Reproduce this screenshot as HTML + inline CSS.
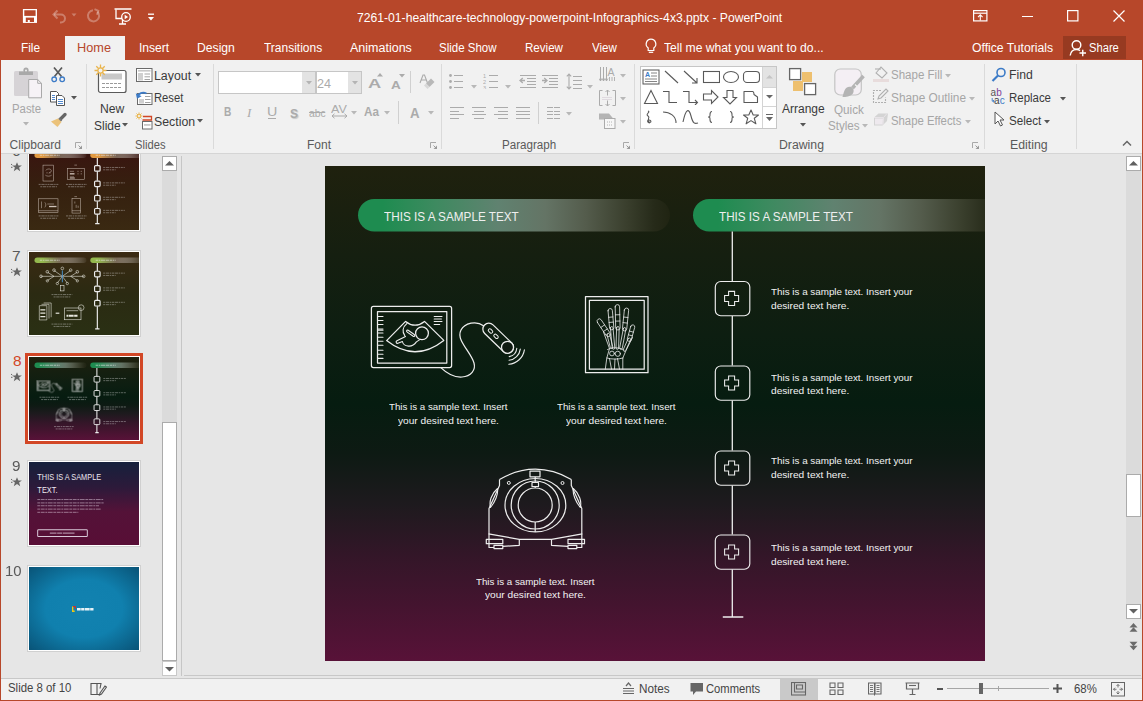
<!DOCTYPE html><html><head><meta charset="utf-8"><style>html,body{margin:0;padding:0;width:1143px;height:701px;overflow:hidden;position:relative;background:#E6E6E6;font-family:"Liberation Sans",sans-serif}</style></head><body><div style="position:absolute;left:0px;top:0px;width:1143px;height:701px;background:#E6E6E6;"></div>
<div style="position:absolute;left:0px;top:0px;width:1143px;height:60px;background:#B7472A;"></div>
<div style="position:absolute;left:0px;top:0px;width:1px;height:701px;background:#B7472A;"></div>
<div style="position:absolute;left:1142px;top:0px;width:1px;height:701px;background:#B7472A;"></div>
<div style="position:absolute;left:0px;top:700px;width:1143px;height:1px;background:#B7472A;"></div>
<svg style="position:absolute;left:22px;top:8px;" width="16" height="16" viewBox="0 0 16 16"><path d="M1.6 1.6h12.7v12.4h-12.7z" fill="none" stroke="#fff" stroke-width="1.4"/><rect x="1" y="7.9" width="14" height="6.8" fill="#fff"/><rect x="3.8" y="9.6" width="8.2" height="4.4" fill="#B7472A"/><rect x="5.8" y="12" width="2" height="2" fill="#fff"/></svg>
<svg style="position:absolute;left:51px;top:8px;" width="16" height="16" viewBox="0 0 16 16"><path d="M3 6.5h7a4 4 0 0 1 0 8h-1" fill="none" stroke="rgba(255,255,255,0.3)" stroke-width="2"/><path d="M6.5 2.5L2.5 6.5L6.5 10.5" fill="none" stroke="rgba(255,255,255,0.3)" stroke-width="2"/></svg>
<svg style="position:absolute;left:71px;top:13px;" width="7" height="5" viewBox="0 0 7 5"><path d="M0.5 0.5h5l-2.5 3z" fill="rgba(255,255,255,0.3)"/></svg>
<svg style="position:absolute;left:86px;top:8px;" width="16" height="16" viewBox="0 0 16 16"><path d="M11.5 3.8a5.6 5.6 0 1 1-4.5-1.6" fill="none" stroke="rgba(255,255,255,0.3)" stroke-width="2"/><path d="M8.5 1.2l3.8 1.6l-1.3 4" fill="none" stroke="rgba(255,255,255,0.3)" stroke-width="2"/></svg>
<svg style="position:absolute;left:114px;top:8px;" width="18" height="17" viewBox="0 0 18 17"><path d="M0.5 1h17" stroke="#fff" stroke-width="1.5"/><path d="M2 1.5v9h6" fill="none" stroke="#fff" stroke-width="1.3"/><circle cx="12" cy="9" r="4.3" fill="none" stroke="#fff" stroke-width="1.3"/><path d="M10.7 6.8v4.4l3.4-2.2z" fill="#fff"/><path d="M5 16h7M8.5 11v5" stroke="#fff" stroke-width="1.3"/></svg>
<svg style="position:absolute;left:147px;top:13px;" width="8" height="9" viewBox="0 0 8 9"><path d="M1 1.2h6" stroke="#fff" stroke-width="1.3"/><path d="M1 4h6l-3 3.5z" fill="#fff"/></svg>
<div style="position:absolute;left:357.03px;top:12.42px;font-family:'Liberation Sans';font-size:12.5px;line-height:12.5px;font-weight:400;color:#fff;white-space:nowrap;transform-origin:0 0;transform:scaleX(0.9725);">7261-01-healthcare-technology-powerpoint-Infographics-4x3.pptx - PowerPoint</div>
<svg style="position:absolute;left:973px;top:10px;" width="15" height="12" viewBox="0 0 15 12"><rect x="0.6" y="0.6" width="13.3" height="10.3" fill="none" stroke="#fff" stroke-width="1.2"/><path d="M0.6 3.2h13.3" stroke="#fff" stroke-width="1.2"/><path d="M7.3 10.5v-5.5M5 7.2l2.3-2.3l2.3 2.3" fill="none" stroke="#fff" stroke-width="1.1"/></svg>
<div style="position:absolute;left:1022px;top:16px;width:11px;height:1px;background:#fff;"></div>
<svg style="position:absolute;left:1067px;top:10px;" width="12" height="12" viewBox="0 0 12 12"><rect x="0.6" y="0.6" width="10.3" height="10.3" fill="none" stroke="#fff" stroke-width="1.2"/></svg>
<svg style="position:absolute;left:1113px;top:10px;" width="12" height="12" viewBox="0 0 12 12"><path d="M0.5 0.5l11 11M11.5 0.5l-11 11" stroke="#fff" stroke-width="1.2"/></svg>
<div style="position:absolute;left:65px;top:36px;width:60px;height:24px;background:#F1F1F1;"></div>
<div style="position:absolute;left:21.05px;top:41.92px;font-family:'Liberation Sans';font-size:12.5px;line-height:12.5px;font-weight:400;color:#fff;white-space:nowrap;transform-origin:0 0;transform:scaleX(0.9474);">File</div>
<div style="position:absolute;left:139.03px;top:41.92px;font-family:'Liberation Sans';font-size:12.5px;line-height:12.5px;font-weight:400;color:#fff;white-space:nowrap;transform-origin:0 0;transform:scaleX(0.9667);">Insert</div>
<div style="position:absolute;left:197.03px;top:41.92px;font-family:'Liberation Sans';font-size:12.5px;line-height:12.5px;font-weight:400;color:#fff;white-space:nowrap;transform-origin:0 0;transform:scaleX(0.9730);">Design</div>
<div style="position:absolute;left:263.50px;top:41.92px;font-family:'Liberation Sans';font-size:12.5px;line-height:12.5px;font-weight:400;color:#fff;white-space:nowrap;transform-origin:0 0;transform:scaleX(0.9583);">Transitions</div>
<div style="position:absolute;left:350.00px;top:41.92px;font-family:'Liberation Sans';font-size:12.5px;line-height:12.5px;font-weight:400;color:#fff;white-space:nowrap;transform-origin:0 0;transform:scaleX(1.0000);">Animations</div>
<div style="position:absolute;left:439.08px;top:41.92px;font-family:'Liberation Sans';font-size:12.5px;line-height:12.5px;font-weight:400;color:#fff;white-space:nowrap;transform-origin:0 0;transform:scaleX(0.9194);">Slide Show</div>
<div style="position:absolute;left:525.08px;top:41.92px;font-family:'Liberation Sans';font-size:12.5px;line-height:12.5px;font-weight:400;color:#fff;white-space:nowrap;transform-origin:0 0;transform:scaleX(0.9250);">Review</div>
<div style="position:absolute;left:592.00px;top:41.92px;font-family:'Liberation Sans';font-size:12.5px;line-height:12.5px;font-weight:400;color:#fff;white-space:nowrap;transform-origin:0 0;transform:scaleX(0.9259);">View</div>
<div style="position:absolute;left:77.38px;top:41.92px;font-family:'Liberation Sans';font-size:12.5px;line-height:12.5px;font-weight:400;color:#B7472A;white-space:nowrap;transform-origin:0 0;transform:scaleX(1.0187);">Home</div>
<svg style="position:absolute;left:644px;top:38px;" width="14" height="17" viewBox="0 0 14 17"><path d="M7 1.2a4.8 4.8 0 0 0-2.8 8.7v2.6h5.6v-2.6A4.8 4.8 0 0 0 7 1.2z" fill="none" stroke="#fff" stroke-width="1.2"/><path d="M4.8 14.3h4.4" stroke="#fff" stroke-width="1.2"/></svg>
<div style="position:absolute;left:664.00px;top:41.92px;font-family:'Liberation Sans';font-size:12.5px;line-height:12.5px;font-weight:400;color:#fff;white-space:nowrap;transform-origin:0 0;transform:scaleX(0.9695);">Tell me what you want to do...</div>
<div style="position:absolute;left:972.02px;top:41.92px;font-family:'Liberation Sans';font-size:12.5px;line-height:12.5px;font-weight:400;color:#fff;white-space:nowrap;transform-origin:0 0;transform:scaleX(0.9756);">Office Tutorials</div>
<div style="position:absolute;left:1063px;top:36px;width:63px;height:23px;background:#973A21;"></div>
<svg style="position:absolute;left:1069px;top:39px;" width="18" height="18" viewBox="0 0 18 18"><circle cx="7.5" cy="6" r="4.3" fill="none" stroke="#fff" stroke-width="1.4"/><path d="M1.2 16.5c0.5-3.8 3-6 6.3-6c1.4 0 2.6 0.4 3.6 1.1" fill="none" stroke="#fff" stroke-width="1.4"/><path d="M10.5 14h6.5M13.75 10.8v6.5" stroke="#fff" stroke-width="1.4"/></svg>
<div style="position:absolute;left:1088.51px;top:41.92px;font-family:'Liberation Sans';font-size:12.5px;line-height:12.5px;font-weight:400;color:#fff;white-space:nowrap;transform-origin:0 0;transform:scaleX(0.8937);">Share</div>
<div style="position:absolute;left:1px;top:60px;width:1141px;height:93px;background:#F1F1F1;"></div>
<div style="position:absolute;left:1px;top:153px;width:1141px;height:1px;background:#D5D5D5;"></div>
<div style="position:absolute;left:86px;top:64px;width:1px;height:85px;background:#DADADA;"></div>
<div style="position:absolute;left:213px;top:64px;width:1px;height:85px;background:#DADADA;"></div>
<div style="position:absolute;left:441px;top:64px;width:1px;height:85px;background:#DADADA;"></div>
<div style="position:absolute;left:634px;top:64px;width:1px;height:85px;background:#DADADA;"></div>
<div style="position:absolute;left:984px;top:64px;width:1px;height:85px;background:#DADADA;"></div>
<div style="position:absolute;left:1076px;top:64px;width:1px;height:85px;background:#DADADA;"></div>
<div style="position:absolute;left:9.60px;top:138.84px;font-family:'Liberation Sans';font-size:12px;line-height:12px;font-weight:400;color:#5A5A5A;white-space:nowrap;transform-origin:0 0;transform:scaleX(1.0000);">Clipboard</div>
<div style="position:absolute;left:134.67px;top:138.84px;font-family:'Liberation Sans';font-size:12px;line-height:12px;font-weight:400;color:#5A5A5A;white-space:nowrap;transform-origin:0 0;transform:scaleX(0.9323);">Slides</div>
<div style="position:absolute;left:306.50px;top:138.84px;font-family:'Liberation Sans';font-size:12px;line-height:12px;font-weight:400;color:#5A5A5A;white-space:nowrap;transform-origin:0 0;transform:scaleX(1.0043);">Font</div>
<div style="position:absolute;left:502.33px;top:138.84px;font-family:'Liberation Sans';font-size:12px;line-height:12px;font-weight:400;color:#5A5A5A;white-space:nowrap;transform-origin:0 0;transform:scaleX(0.9667);">Paragraph</div>
<div style="position:absolute;left:778.58px;top:138.84px;font-family:'Liberation Sans';font-size:12px;line-height:12px;font-weight:400;color:#5A5A5A;white-space:nowrap;transform-origin:0 0;transform:scaleX(1.0214);">Drawing</div>
<div style="position:absolute;left:1010.47px;top:138.84px;font-family:'Liberation Sans';font-size:12px;line-height:12px;font-weight:400;color:#5A5A5A;white-space:nowrap;transform-origin:0 0;transform:scaleX(1.0257);">Editing</div>
<svg style="position:absolute;left:75px;top:142px;" width="8" height="8" viewBox="0 0 8 8"><path d="M0.5 6V0.5H6" fill="none" stroke="#A8A8A8" stroke-width="1"/><path d="M3.5 3.5l2.5 2.5" stroke="#999" stroke-width="1"/><path d="M7 3.5V7H3.5z" fill="#999"/></svg>
<svg style="position:absolute;left:430px;top:142px;" width="8" height="8" viewBox="0 0 8 8"><path d="M0.5 6V0.5H6" fill="none" stroke="#A8A8A8" stroke-width="1"/><path d="M3.5 3.5l2.5 2.5" stroke="#999" stroke-width="1"/><path d="M7 3.5V7H3.5z" fill="#999"/></svg>
<svg style="position:absolute;left:623px;top:142px;" width="8" height="8" viewBox="0 0 8 8"><path d="M0.5 6V0.5H6" fill="none" stroke="#A8A8A8" stroke-width="1"/><path d="M3.5 3.5l2.5 2.5" stroke="#999" stroke-width="1"/><path d="M7 3.5V7H3.5z" fill="#999"/></svg>
<svg style="position:absolute;left:972px;top:142px;" width="8" height="8" viewBox="0 0 8 8"><path d="M0.5 6V0.5H6" fill="none" stroke="#A8A8A8" stroke-width="1"/><path d="M3.5 3.5l2.5 2.5" stroke="#999" stroke-width="1"/><path d="M7 3.5V7H3.5z" fill="#999"/></svg>
<svg style="position:absolute;left:13px;top:67px;" width="30" height="32" viewBox="0 0 30 32"><rect x="1" y="4" width="24" height="25" rx="1.5" fill="#D6D3D6"/><path d="M6 4.5h14v3.5h-14z" fill="#A9A9A9"/><circle cx="13" cy="3.2" r="2.6" fill="#A9A9A9"/><circle cx="13" cy="3.4" r="1" fill="#F1F1F1"/><path d="M15.7 12.5h9l3.8 3.8v14.5h-12.8z" fill="#F6F2F6" stroke="#A9A9A9" stroke-width="1"/><path d="M24.7 12.5v3.8h3.8" fill="none" stroke="#A9A9A9" stroke-width="1"/></svg>
<div style="position:absolute;left:11.55px;top:102.84px;font-family:'Liberation Sans';font-size:12px;line-height:12px;font-weight:400;color:#A6A6A6;white-space:nowrap;transform-origin:0 0;transform:scaleX(0.9483);">Paste</div>
<svg style="position:absolute;left:23px;top:122px;" width="6" height="4" viewBox="0 0 6 4"><path d="M0 0h6l-3 3.5z" fill="#B4B4B4"/></svg>
<svg style="position:absolute;left:50px;top:66px;" width="16" height="17" viewBox="0 0 16 17"><path d="M4 1.5l7.5 9M12 1.5l-7.5 9" stroke="#595959" stroke-width="1.7"/><circle cx="4.2" cy="13.3" r="2.3" fill="none" stroke="#3C7BC7" stroke-width="1.3"/><circle cx="12.2" cy="13.3" r="2.3" fill="none" stroke="#3C7BC7" stroke-width="1.3"/></svg>
<svg style="position:absolute;left:49px;top:90px;" width="17" height="17" viewBox="0 0 17 17"><path d="M1.5 1.5h6l2 2v8.5h-8z" fill="#fff" stroke="#555" stroke-width="1"/><path d="M7.5 5.5h5.5l2.5 2.5v7.5h-8z" fill="#fff" stroke="#555" stroke-width="1"/><path d="M3 5.5h3M3 7.5h3M3 9.5h3M9 9.5h5M9 11.5h5M9 13.5h5" stroke="#3C7BC7" stroke-width="0.9"/></svg>
<svg style="position:absolute;left:71px;top:96px;" width="6" height="4" viewBox="0 0 6 4"><path d="M0 0h6l-3 3.5z" fill="#555"/></svg>
<svg style="position:absolute;left:50px;top:112px;" width="17" height="17" viewBox="0 0 17 17"><path d="M15 2.5l-5 5" stroke="#666" stroke-width="3.2" stroke-linecap="round"/><path d="M9 6.5l2.5 2.5" stroke="#777" stroke-width="2"/><path d="M8 6.5l3.5 3.5l-4 5l-6.5-5.5z" fill="#EBC27A"/></svg>
<svg style="position:absolute;left:94px;top:64px;" width="34" height="31" viewBox="0 0 34 31"><rect x="4.5" y="6.5" width="27.5" height="22" rx="2" fill="#fff" stroke="#5A5A5A" stroke-width="1.2"/><rect x="7.5" y="9.5" width="20.5" height="6" fill="#C8C8C8"/><path d="M8 19.5h20M8 23.5h20" stroke="#9A9A9A" stroke-width="1" stroke-dasharray="3 1"/><g stroke="#E9B44C" stroke-width="1.3"><path d="M6.5 0.5v12M0.5 6.5h12M2.3 2.3l8.4 8.4M10.7 2.3l-8.4 8.4"/></g><circle cx="6.5" cy="6.5" r="2.6" fill="#F1F1F1" stroke="#E9B44C" stroke-width="1.2"/></svg>
<div style="position:absolute;left:99.69px;top:102.84px;font-family:'Liberation Sans';font-size:12px;line-height:12px;font-weight:400;color:#3A3A3A;white-space:nowrap;transform-origin:0 0;transform:scaleX(1.0130);">New</div>
<div style="position:absolute;left:94.00px;top:119.84px;font-family:'Liberation Sans';font-size:12px;line-height:12px;font-weight:400;color:#3A3A3A;white-space:nowrap;transform-origin:0 0;transform:scaleX(1.0000);">Slide</div>
<svg style="position:absolute;left:122px;top:123px;" width="6" height="4" viewBox="0 0 6 4"><path d="M0 0h6l-3 3.5z" fill="#555"/></svg>
<svg style="position:absolute;left:135px;top:67px;" width="18" height="16" viewBox="0 0 18 16"><rect x="1.5" y="1.5" width="15.5" height="13" fill="#fff" stroke="#6A6A6A" stroke-width="1"/><rect x="3" y="3" width="12.5" height="1.6" fill="#C8C8C8"/><rect x="3" y="6" width="5" height="7.5" fill="#D0D0D0"/><path d="M9.5 7h5.5M9.5 9.8h5.5M9.5 12.5h5.5" stroke="#9A9A9A" stroke-width="0.9"/></svg>
<div style="position:absolute;left:153.97px;top:69.84px;font-family:'Liberation Sans';font-size:12px;line-height:12px;font-weight:400;color:#3A3A3A;white-space:nowrap;transform-origin:0 0;transform:scaleX(1.0286);">Layout</div>
<svg style="position:absolute;left:195px;top:73px;" width="6" height="4" viewBox="0 0 6 4"><path d="M0 0h6l-3 3.5z" fill="#555"/></svg>
<svg style="position:absolute;left:135px;top:90px;" width="18" height="16" viewBox="0 0 18 16"><rect x="2.5" y="3.5" width="14.5" height="11" fill="#fff" stroke="#6A6A6A" stroke-width="1"/><rect x="4" y="9" width="5" height="4.5" fill="#D0D0D0"/><path d="M10 6.5h5.5M10 9.5h5.5M10 12.5h5.5" stroke="#9A9A9A" stroke-width="0.9"/><path d="M2.5 6.5c1-3 5-5 9-3" fill="none" stroke="#3C7BC7" stroke-width="1.7"/><path d="M0.8 3.2l1.2 5.6l4.6-2.6z" fill="#3C7BC7"/></svg>
<div style="position:absolute;left:154.07px;top:92.44px;font-family:'Liberation Sans';font-size:12px;line-height:12px;font-weight:400;color:#3A3A3A;white-space:nowrap;transform-origin:0 0;transform:scaleX(0.9333);">Reset</div>
<svg style="position:absolute;left:135px;top:112px;" width="18" height="18" viewBox="0 0 18 18"><g stroke="#E9B44C" stroke-width="1"><path d="M4 0.5v7M0.5 4h7M1.5 1.5l5 5M6.5 1.5l-5 5"/></g><circle cx="4" cy="4" r="1.6" fill="#F1F1F1" stroke="#E9B44C" stroke-width="0.9"/><path d="M8 4.5h8.5v3.5h-9" fill="none" stroke="#D24726" stroke-width="1.3"/><rect x="7.5" y="9.5" width="9.5" height="7.5" fill="#fff" stroke="#6A6A6A" stroke-width="1"/><rect x="9" y="12" width="6.5" height="1.8" fill="#C8C8C8"/></svg>
<div style="position:absolute;left:153.97px;top:115.64px;font-family:'Liberation Sans';font-size:12px;line-height:12px;font-weight:400;color:#3A3A3A;white-space:nowrap;transform-origin:0 0;transform:scaleX(1.0263);">Section</div>
<svg style="position:absolute;left:197px;top:119px;" width="6" height="4" viewBox="0 0 6 4"><path d="M0 0h6l-3 3.5z" fill="#555"/></svg>
<div style="position:absolute;left:218px;top:71px;width:98px;height:23px;background:#fff;box-sizing:border-box;border:1px solid #C6C6C6"></div>
<div style="position:absolute;left:302px;top:72px;width:13px;height:21px;background:#E3E3E3;"></div>
<svg style="position:absolute;left:306px;top:81px;" width="6" height="4" viewBox="0 0 6 4"><path d="M0 0h6l-3 3.5z" fill="#B4B4B4"/></svg>
<div style="position:absolute;left:316px;top:71px;width:46px;height:23px;background:#fff;box-sizing:border-box;border:1px solid #C6C6C6"></div>
<div style="position:absolute;left:348px;top:72px;width:13px;height:21px;background:#E3E3E3;"></div>
<svg style="position:absolute;left:352px;top:81px;" width="6" height="4" viewBox="0 0 6 4"><path d="M0 0h6l-3 3.5z" fill="#B4B4B4"/></svg>
<div style="position:absolute;left:317.35px;top:77.84px;font-family:'Liberation Sans';font-size:12px;line-height:12px;font-weight:400;color:#ABABAB;white-space:nowrap;transform-origin:0 0;transform:scaleX(1.0500);">24</div>
<div style="position:absolute;left:367.80px;top:76.97px;font-family:'Liberation Sans';font-size:13.5px;line-height:13.5px;font-weight:700;color:#ABABAB;white-space:nowrap;transform-origin:0 0;transform:scaleX(1.3556);">A</div>
<svg style="position:absolute;left:377px;top:73px;" width="6" height="4" viewBox="0 0 6 4"><path d="M0 3.5h6l-3-3.5z" fill="#ABABAB"/></svg>
<div style="position:absolute;left:391.00px;top:79.51px;font-family:'Liberation Sans';font-size:10.5px;line-height:10.5px;font-weight:700;color:#ABABAB;white-space:nowrap;transform-origin:0 0;transform:scaleX(1.2857);">A</div>
<svg style="position:absolute;left:399px;top:74px;" width="6" height="4" viewBox="0 0 6 4"><path d="M0 0h6l-3 3.5z" fill="#ABABAB"/></svg>
<div style="position:absolute;left:410px;top:71px;width:1px;height:22px;background:#D0D0D0;"></div>
<svg style="position:absolute;left:418px;top:72px;" width="17" height="18" viewBox="0 0 17 18"><path d="M2 11l3-8h1.5l3 8M3.5 8h4.5" fill="none" stroke="#ABABAB" stroke-width="1.1"/><path d="M8 11.5l5-5l3.5 3.5l-5 5z" fill="#B8B8B8"/><path d="M8 11.5l3.5 3.5l-2 2l-3.5-3.5z" fill="#D8D8D8"/></svg>
<div style="position:absolute;left:224.19px;top:106.42px;font-family:'Liberation Sans';font-size:12.5px;line-height:12.5px;font-weight:700;color:#ABABAB;white-space:nowrap;transform-origin:0 0;transform:scaleX(0.8125);">B</div>
<div style="position:absolute;left:247.00px;top:106.00px;font-family:'Liberation Serif';font-size:13px;line-height:13px;font-weight:400;color:#ABABAB;white-space:nowrap;transform-origin:0 0;transform:scaleX(1.0000);font-style:italic">I</div>
<div style="position:absolute;left:266.86px;top:106.42px;font-family:'Liberation Sans';font-size:12.5px;line-height:12.5px;font-weight:400;color:#ABABAB;white-space:nowrap;transform-origin:0 0;transform:scaleX(1.1429);">U</div>
<div style="position:absolute;left:268px;top:118px;width:8px;height:1px;background:#ABABAB;"></div>
<div style="position:absolute;left:290.07px;top:106.50px;font-family:'Liberation Sans';font-size:13px;line-height:13px;font-weight:700;color:#ABABAB;white-space:nowrap;transform-origin:0 0;transform:scaleX(0.9286);text-shadow:1px 1px 1px #C8C8C8">S</div>
<div style="position:absolute;left:309.00px;top:107.69px;font-family:'Liberation Sans';font-size:11px;line-height:11px;font-weight:400;color:#ABABAB;white-space:nowrap;transform-origin:0 0;transform:scaleX(0.9412);">abc</div>
<div style="position:absolute;left:309px;top:112px;width:16px;height:1px;background:#ABABAB;"></div>
<div style="position:absolute;left:331.00px;top:103.69px;font-family:'Liberation Sans';font-size:11px;line-height:11px;font-weight:400;color:#ABABAB;white-space:nowrap;transform-origin:0 0;transform:scaleX(1.1429);">AV</div>
<svg style="position:absolute;left:331px;top:113px;" width="17" height="6" viewBox="0 0 17 6"><path d="M1 3h15M3.5 0.8L1 3l2.5 2.2M13.5 0.8L16 3l-2.5 2.2" fill="none" stroke="#ABABAB" stroke-width="1"/></svg>
<svg style="position:absolute;left:351px;top:111px;" width="6" height="4" viewBox="0 0 6 4"><path d="M0 0h6l-3 3.5z" fill="#B8B8B8"/></svg>
<div style="position:absolute;left:364.00px;top:106.42px;font-family:'Liberation Sans';font-size:12.5px;line-height:12.5px;font-weight:700;color:#ABABAB;white-space:nowrap;transform-origin:0 0;transform:scaleX(0.9375);">Aa</div>
<svg style="position:absolute;left:384px;top:111px;" width="6" height="4" viewBox="0 0 6 4"><path d="M0 0h6l-3 3.5z" fill="#B8B8B8"/></svg>
<div style="position:absolute;left:398px;top:101px;width:1px;height:23px;background:#D0D0D0;"></div>
<div style="position:absolute;left:410.00px;top:105.65px;font-family:'Liberation Sans';font-size:14px;line-height:14px;font-weight:700;color:#ABABAB;white-space:nowrap;transform-origin:0 0;transform:scaleX(0.9500);">A</div>
<svg style="position:absolute;left:428px;top:111px;" width="6" height="4" viewBox="0 0 6 4"><path d="M0 0h6l-3 3.5z" fill="#B8B8B8"/></svg>
<svg style="position:absolute;left:449px;top:74px;" width="3" height="3" viewBox="0 0 3 3"><circle cx="1.5" cy="1.5" r="1.4" fill="#ABABAB"/></svg>
<div style="position:absolute;left:454px;top:75px;width:9px;height:1px;background:#ABABAB;"></div>
<svg style="position:absolute;left:449px;top:80px;" width="3" height="3" viewBox="0 0 3 3"><circle cx="1.5" cy="1.5" r="1.4" fill="#ABABAB"/></svg>
<div style="position:absolute;left:454px;top:81px;width:9px;height:1px;background:#ABABAB;"></div>
<svg style="position:absolute;left:449px;top:86px;" width="3" height="3" viewBox="0 0 3 3"><circle cx="1.5" cy="1.5" r="1.4" fill="#ABABAB"/></svg>
<div style="position:absolute;left:454px;top:87px;width:9px;height:1px;background:#ABABAB;"></div>
<svg style="position:absolute;left:471px;top:85px;" width="6" height="4" viewBox="0 0 6 4"><path d="M0 0h6l-3 3.5z" fill="#B8B8B8"/></svg>
<svg style="position:absolute;left:483px;top:72px;" width="5" height="17" viewBox="0 0 5 17"><text x="0" y="6" font-size="5.5" fill="#ABABAB" font-family="Liberation Sans">1</text><text x="0" y="12" font-size="5.5" fill="#ABABAB" font-family="Liberation Sans">2</text><text x="0" y="18" font-size="5.5" fill="#ABABAB" font-family="Liberation Sans">3</text></svg>
<div style="position:absolute;left:489px;top:75px;width:9px;height:1px;background:#ABABAB;"></div>
<div style="position:absolute;left:489px;top:81px;width:9px;height:1px;background:#ABABAB;"></div>
<div style="position:absolute;left:489px;top:87px;width:9px;height:1px;background:#ABABAB;"></div>
<svg style="position:absolute;left:505px;top:85px;" width="6" height="4" viewBox="0 0 6 4"><path d="M0 0h6l-3 3.5z" fill="#B8B8B8"/></svg>
<div style="position:absolute;left:520px;top:75px;width:16px;height:1px;background:#ABABAB;"></div>
<div style="position:absolute;left:520px;top:87px;width:16px;height:1px;background:#ABABAB;"></div>
<div style="position:absolute;left:527px;top:78px;width:9px;height:1px;background:#ABABAB;"></div>
<div style="position:absolute;left:527px;top:81px;width:9px;height:1px;background:#ABABAB;"></div>
<div style="position:absolute;left:527px;top:84px;width:9px;height:1px;background:#ABABAB;"></div>
<svg style="position:absolute;left:519px;top:77px;" width="7" height="7" viewBox="0 0 7 7"><path d="M6 3.5H1.5M3.8 1L1 3.5l2.8 2.5" fill="none" stroke="#ABABAB" stroke-width="1.3"/></svg>
<div style="position:absolute;left:542px;top:75px;width:16px;height:1px;background:#ABABAB;"></div>
<div style="position:absolute;left:542px;top:87px;width:16px;height:1px;background:#ABABAB;"></div>
<div style="position:absolute;left:549px;top:78px;width:9px;height:1px;background:#ABABAB;"></div>
<div style="position:absolute;left:549px;top:81px;width:9px;height:1px;background:#ABABAB;"></div>
<div style="position:absolute;left:549px;top:84px;width:9px;height:1px;background:#ABABAB;"></div>
<svg style="position:absolute;left:542px;top:77px;" width="7" height="7" viewBox="0 0 7 7"><path d="M0 3.5h4.5M2.2 1L5 3.5L2.2 6" fill="none" stroke="#ABABAB" stroke-width="1.3"/></svg>
<div style="position:absolute;left:573px;top:76px;width:9px;height:1px;background:#ABABAB;"></div>
<div style="position:absolute;left:573px;top:80px;width:9px;height:1px;background:#ABABAB;"></div>
<div style="position:absolute;left:573px;top:84px;width:9px;height:1px;background:#ABABAB;"></div>
<div style="position:absolute;left:573px;top:88px;width:9px;height:1px;background:#ABABAB;"></div>
<svg style="position:absolute;left:566px;top:73px;" width="6" height="17" viewBox="0 0 6 17"><path d="M3 1v15M0.8 3.3L3 1l2.2 2.3M0.8 13.7L3 16l2.2-2.3" fill="none" stroke="#ABABAB" stroke-width="1.1"/></svg>
<svg style="position:absolute;left:587px;top:85px;" width="6" height="4" viewBox="0 0 6 4"><path d="M0 0h6l-3 3.5z" fill="#B8B8B8"/></svg>
<svg style="position:absolute;left:599px;top:66px;" width="17" height="17" viewBox="0 0 17 17"><path d="M1.5 1v14M4.5 1v14M7.5 1v14" stroke="#ABABAB" stroke-width="1"/><path d="M0 12.5l1.5 2.5l1.5-2.5M3 12.5l1.5 2.5l1.5-2.5M6 12.5l1.5 2.5l1.5-2.5" fill="none" stroke="#ABABAB" stroke-width="0.9"/><text x="8.5" y="9.5" font-size="10.5" fill="#ABABAB" font-family="Liberation Sans">A</text><path d="M10.5 11v4M13 11v4M15.5 11v4" stroke="#ABABAB" stroke-width="0.9"/></svg>
<svg style="position:absolute;left:620px;top:74px;" width="6" height="4" viewBox="0 0 6 4"><path d="M0 0h6l-3 3.5z" fill="#B8B8B8"/></svg>
<svg style="position:absolute;left:599px;top:89px;" width="17" height="18" viewBox="0 0 17 18"><path d="M3.5 1.5h-3v15h3M13.5 1.5h3v15h-3" fill="none" stroke="#ABABAB" stroke-width="1"/><path d="M3.5 8.5h10M3.5 10.5h10" stroke="#C8B8C8" stroke-width="0.8" stroke-dasharray="1 1"/><path d="M8.5 1v5.5M6.5 3l2-2l2 2M8.5 17v-5.5M6.5 15l2 2l2-2" fill="none" stroke="#ABABAB" stroke-width="1"/></svg>
<svg style="position:absolute;left:620px;top:97px;" width="6" height="4" viewBox="0 0 6 4"><path d="M0 0h6l-3 3.5z" fill="#B8B8B8"/></svg>
<svg style="position:absolute;left:599px;top:113px;" width="17" height="16" viewBox="0 0 17 16"><path d="M0 0.5h10l5 6h-15z" fill="#B4B4B4"/><rect x="5.5" y="5.5" width="10.5" height="10" fill="#F7F7F7" stroke="#ABABAB" stroke-width="1"/><path d="M8 9h6M8 12h6" stroke="#ABABAB" stroke-width="0.9" stroke-dasharray="1 1"/></svg>
<svg style="position:absolute;left:620px;top:120px;" width="6" height="4" viewBox="0 0 6 4"><path d="M0 0h6l-3 3.5z" fill="#B8B8B8"/></svg>
<div style="position:absolute;left:450px;top:107px;width:14px;height:1px;background:#ABABAB;"></div>
<div style="position:absolute;left:472px;top:107px;width:14px;height:1px;background:#ABABAB;"></div>
<div style="position:absolute;left:494px;top:107px;width:14px;height:1px;background:#ABABAB;"></div>
<div style="position:absolute;left:516px;top:107px;width:14px;height:1px;background:#ABABAB;"></div>
<div style="position:absolute;left:547px;top:107px;width:6px;height:1px;background:#ABABAB;"></div>
<div style="position:absolute;left:554px;top:107px;width:6px;height:1px;background:#ABABAB;"></div>
<div style="position:absolute;left:450px;top:111px;width:9px;height:1px;background:#ABABAB;"></div>
<div style="position:absolute;left:474px;top:111px;width:10px;height:1px;background:#ABABAB;"></div>
<div style="position:absolute;left:498px;top:111px;width:10px;height:1px;background:#ABABAB;"></div>
<div style="position:absolute;left:516px;top:111px;width:14px;height:1px;background:#ABABAB;"></div>
<div style="position:absolute;left:547px;top:111px;width:6px;height:1px;background:#ABABAB;"></div>
<div style="position:absolute;left:554px;top:111px;width:6px;height:1px;background:#ABABAB;"></div>
<div style="position:absolute;left:450px;top:114px;width:14px;height:1px;background:#ABABAB;"></div>
<div style="position:absolute;left:472px;top:114px;width:14px;height:1px;background:#ABABAB;"></div>
<div style="position:absolute;left:494px;top:114px;width:14px;height:1px;background:#ABABAB;"></div>
<div style="position:absolute;left:516px;top:114px;width:14px;height:1px;background:#ABABAB;"></div>
<div style="position:absolute;left:547px;top:114px;width:6px;height:1px;background:#ABABAB;"></div>
<div style="position:absolute;left:554px;top:114px;width:6px;height:1px;background:#ABABAB;"></div>
<div style="position:absolute;left:450px;top:118px;width:9px;height:1px;background:#ABABAB;"></div>
<div style="position:absolute;left:474px;top:118px;width:10px;height:1px;background:#ABABAB;"></div>
<div style="position:absolute;left:498px;top:118px;width:10px;height:1px;background:#ABABAB;"></div>
<div style="position:absolute;left:516px;top:118px;width:14px;height:1px;background:#ABABAB;"></div>
<div style="position:absolute;left:547px;top:118px;width:6px;height:1px;background:#ABABAB;"></div>
<div style="position:absolute;left:554px;top:118px;width:6px;height:1px;background:#ABABAB;"></div>
<div style="position:absolute;left:538px;top:102px;width:1px;height:22px;background:#D0D0D0;"></div>
<svg style="position:absolute;left:566px;top:112px;" width="6" height="4" viewBox="0 0 6 4"><path d="M0 0h6l-3 3.5z" fill="#B8B8B8"/></svg>
<div style="position:absolute;left:640px;top:66px;width:137px;height:63px;background:#fff;box-sizing:border-box;border:1px solid #C6C6C6"></div>
<div style="position:absolute;left:762px;top:67px;width:1px;height:61px;background:#D4D4D4;"></div>
<div style="position:absolute;left:763px;top:67px;width:13px;height:21px;background:#E3E3E3;"></div>
<div style="position:absolute;left:763px;top:87px;width:13px;height:1px;background:#D4D4D4;"></div>
<div style="position:absolute;left:763px;top:106px;width:13px;height:1px;background:#D4D4D4;"></div>
<svg style="position:absolute;left:766px;top:75px;" width="7" height="4" viewBox="0 0 7 4"><path d="M0 3.5h7l-3.5-3.5z" fill="#C4C4C4"/></svg>
<svg style="position:absolute;left:766px;top:95px;" width="7" height="4" viewBox="0 0 7 4"><path d="M0 0h7l-3.5 3.5z" fill="#666"/></svg>
<svg style="position:absolute;left:765px;top:113px;" width="9" height="10" viewBox="0 0 9 10"><path d="M1 1.5h7" stroke="#666" stroke-width="1"/><path d="M1 4h7l-3.5 4z" fill="#666"/></svg>
<svg style="position:absolute;left:642px;top:69px;" width="18" height="16" viewBox="0 0 18 16"><rect x="1" y="1" width="16" height="14" fill="#fff" stroke="#555" stroke-width="1"/><text x="3" y="8" font-size="7" font-weight="700" fill="#3C7BC7" font-family="Liberation Sans">A</text><path d="M9 4h6M9 7h6M3 10h12M3 12.5h12" stroke="#777" stroke-width="0.9"/></svg>
<svg style="position:absolute;left:662px;top:69px;" width="18" height="16" viewBox="0 0 18 16"><path d="M3 2l13 12" stroke="#595959" stroke-width="1.1"/></svg>
<svg style="position:absolute;left:682px;top:69px;" width="18" height="16" viewBox="0 0 18 16"><path d="M2 2l13 12M15 9v5h-5" fill="none" stroke="#595959" stroke-width="1.1"/></svg>
<svg style="position:absolute;left:702px;top:69px;" width="18" height="16" viewBox="0 0 18 16"><rect x="1.5" y="2.5" width="16" height="11" fill="none" stroke="#595959" stroke-width="1.1"/></svg>
<svg style="position:absolute;left:722px;top:69px;" width="18" height="16" viewBox="0 0 18 16"><ellipse cx="9" cy="8" rx="7.5" ry="5.5" fill="none" stroke="#595959" stroke-width="1.1"/></svg>
<svg style="position:absolute;left:742px;top:69px;" width="18" height="16" viewBox="0 0 18 16"><rect x="1.5" y="2.5" width="16" height="11" rx="3.5" fill="none" stroke="#595959" stroke-width="1.1"/></svg>
<svg style="position:absolute;left:642px;top:89px;" width="18" height="16" viewBox="0 0 18 16"><path d="M9 1.5l6.5 13h-13z" fill="none" stroke="#595959" stroke-width="1.1"/></svg>
<svg style="position:absolute;left:662px;top:89px;" width="18" height="16" viewBox="0 0 18 16"><path d="M1 2.5h6v11h8" fill="none" stroke="#595959" stroke-width="1.1"/></svg>
<svg style="position:absolute;left:682px;top:89px;" width="18" height="16" viewBox="0 0 18 16"><path d="M1 2.5h6v11h8M13 11l2.5 2.5l-2.5 2.5" fill="none" stroke="#595959" stroke-width="1.1"/></svg>
<svg style="position:absolute;left:702px;top:89px;" width="18" height="16" viewBox="0 0 18 16"><path d="M1.5 5h8v-3.5l6.5 6.5l-6.5 6.5v-3.5h-8z" fill="none" stroke="#595959" stroke-width="1.1"/></svg>
<svg style="position:absolute;left:722px;top:89px;" width="18" height="16" viewBox="0 0 18 16"><path d="M5 1.5h6v7h3.5l-6.5 6.5l-6.5-6.5h3.5z" fill="none" stroke="#595959" stroke-width="1.1"/></svg>
<svg style="position:absolute;left:742px;top:89px;" width="18" height="16" viewBox="0 0 18 16"><path d="M2 2.5h9a4 4 0 0 1 1 3l3.5 2.5v5.5h-13.5z" fill="none" stroke="#595959" stroke-width="1.1" stroke-linejoin="round"/></svg>
<svg style="position:absolute;left:642px;top:109px;" width="18" height="16" viewBox="0 0 18 16"><path d="M6 2c3 1 -3 3 0 5c3 2 -2 3 1 6c2 1.5 3-2 0-2c-2 0 -2 3 1 3" fill="none" stroke="#595959" stroke-width="1.1"/></svg>
<svg style="position:absolute;left:662px;top:109px;" width="18" height="16" viewBox="0 0 18 16"><path d="M1 3c7 0 13 4 13 11" fill="none" stroke="#595959" stroke-width="1.1"/></svg>
<svg style="position:absolute;left:682px;top:109px;" width="18" height="16" viewBox="0 0 18 16"><path d="M1 13c3-14 6-14 8-6c2 8 4 8 7 7" fill="none" stroke="#595959" stroke-width="1.1"/></svg>
<svg style="position:absolute;left:702px;top:109px;" width="18" height="16" viewBox="0 0 18 16"><path d="M10 2.5c-2 0-2 1-2 3s0 2.5-2 2.5c2 0 2 0.5 2 2.5s0 3 2 3" fill="none" stroke="#595959" stroke-width="1.1"/></svg>
<svg style="position:absolute;left:722px;top:109px;" width="18" height="16" viewBox="0 0 18 16"><path d="M8 2.5c2 0 2 1 2 3s0 2.5 2 2.5c-2 0-2 0.5-2 2.5s0 3-2 3" fill="none" stroke="#595959" stroke-width="1.1"/></svg>
<svg style="position:absolute;left:742px;top:109px;" width="18" height="16" viewBox="0 0 18 16"><path d="M9 1l2.2 5h5.3l-4.2 3.3l1.6 5.5l-4.9-3.2l-4.9 3.2l1.6-5.5l-4.2-3.3h5.3z" fill="none" stroke="#595959" stroke-width="1.1" stroke-linejoin="round"/></svg>
<svg style="position:absolute;left:788px;top:67px;" width="30" height="30" viewBox="0 0 30 30"><rect x="14" y="5" width="10" height="10" fill="#EEC06F"/><rect x="5" y="14" width="10" height="10" fill="#EEC06F"/><rect x="1.6" y="1.6" width="11" height="11" fill="#fff" stroke="#666" stroke-width="1.3"/><rect x="16.6" y="16.6" width="11" height="11" fill="#fff" stroke="#666" stroke-width="1.3"/></svg>
<div style="position:absolute;left:782.00px;top:102.64px;font-family:'Liberation Sans';font-size:12px;line-height:12px;font-weight:400;color:#3A3A3A;white-space:nowrap;transform-origin:0 0;transform:scaleX(1.0000);">Arrange</div>
<svg style="position:absolute;left:800px;top:123px;" width="6" height="4" viewBox="0 0 6 4"><path d="M0 0h6l-3 3.5z" fill="#555"/></svg>
<svg style="position:absolute;left:833px;top:67px;" width="32" height="33" viewBox="0 0 32 33"><rect x="1.8" y="2" width="26.5" height="26" rx="5.5" fill="#F4EFF4" stroke="#C4C4C4" stroke-width="1.2"/><path d="M30.5 9l-11 12" stroke="#B4B4B4" stroke-width="3.6"/><path d="M22 17.5l3 3" stroke="#F1F1F1" stroke-width="1.2"/><path d="M18.5 20c-3-1-6 0.5-7 3.5c-1 2.5-1.5 4.5-2 6.5c3 0 8-0.5 10-3c1.8-2.2 1.5-5.5-1-7z" fill="#B4B4B4"/></svg>
<div style="position:absolute;left:833.60px;top:103.54px;font-family:'Liberation Sans';font-size:12px;line-height:12px;font-weight:400;color:#A6A6A6;white-space:nowrap;transform-origin:0 0;transform:scaleX(0.9742);">Quick</div>
<div style="position:absolute;left:828.03px;top:119.84px;font-family:'Liberation Sans';font-size:12px;line-height:12px;font-weight:400;color:#A6A6A6;white-space:nowrap;transform-origin:0 0;transform:scaleX(0.9677);">Styles</div>
<svg style="position:absolute;left:862px;top:124px;" width="6" height="4" viewBox="0 0 6 4"><path d="M0 0h6l-3 3.5z" fill="#B8B8B8"/></svg>
<svg style="position:absolute;left:872px;top:65px;" width="18" height="17" viewBox="0 0 18 17"><path d="M4 8l5-6l6 6l-5 5z" fill="none" stroke="#B0B0B0" stroke-width="1.1"/><path d="M3 4h6" stroke="#B0B0B0" stroke-width="1.1"/><rect x="1" y="14" width="16" height="3" fill="#E8DCDC"/></svg>
<div style="position:absolute;left:891.04px;top:69.04px;font-family:'Liberation Sans';font-size:12px;line-height:12px;font-weight:400;color:#A6A6A6;white-space:nowrap;transform-origin:0 0;transform:scaleX(0.9615);">Shape Fill</div>
<svg style="position:absolute;left:945px;top:74px;" width="6" height="4" viewBox="0 0 6 4"><path d="M0 0h6l-3 3.5z" fill="#B8B8B8"/></svg>
<svg style="position:absolute;left:872px;top:88px;" width="18" height="16" viewBox="0 0 18 16"><path d="M9 2.5h-7.5v12h12v-5" fill="none" stroke="#B0B0B0" stroke-width="1.1" stroke-dasharray="2 1"/><path d="M6 11l1-3l7-7l2 2l-7 7z" fill="none" stroke="#B0B0B0" stroke-width="1.1"/></svg>
<div style="position:absolute;left:891.01px;top:92.24px;font-family:'Liberation Sans';font-size:12px;line-height:12px;font-weight:400;color:#A6A6A6;white-space:nowrap;transform-origin:0 0;transform:scaleX(0.9867);">Shape Outline</div>
<svg style="position:absolute;left:969px;top:97px;" width="6" height="4" viewBox="0 0 6 4"><path d="M0 0h6l-3 3.5z" fill="#B8B8B8"/></svg>
<svg style="position:absolute;left:872px;top:111px;" width="18" height="16" viewBox="0 0 18 16"><path d="M2 6.5l4.5-4h9.5l-1 7.5l-4.5 4.5h-8.5z" fill="#D4D4D4"/><path d="M2 6.5h9.5l3.5-4M11.5 6.5l-0.5 7.5" fill="none" stroke="#E8E4E8" stroke-width="1"/><path d="M3 7.5h8l-0.5 6h-7.5z" fill="#EEE9EE"/></svg>
<div style="position:absolute;left:891.05px;top:114.84px;font-family:'Liberation Sans';font-size:12px;line-height:12px;font-weight:400;color:#A6A6A6;white-space:nowrap;transform-origin:0 0;transform:scaleX(0.9452);">Shape Effects</div>
<svg style="position:absolute;left:965px;top:120px;" width="6" height="4" viewBox="0 0 6 4"><path d="M0 0h6l-3 3.5z" fill="#B8B8B8"/></svg>
<svg style="position:absolute;left:991px;top:67px;" width="16" height="15" viewBox="0 0 16 15"><circle cx="10" cy="5.5" r="4" fill="none" stroke="#3C7BC7" stroke-width="1.6"/><path d="M7 8.5l-5.5 5.5" stroke="#3C7BC7" stroke-width="2.2"/></svg>
<div style="position:absolute;left:1008.98px;top:69.04px;font-family:'Liberation Sans';font-size:12px;line-height:12px;font-weight:400;color:#3A3A3A;white-space:nowrap;transform-origin:0 0;transform:scaleX(1.0182);">Find</div>
<svg style="position:absolute;left:990px;top:88px;" width="18" height="17" viewBox="0 0 18 17"><text x="0.5" y="8" font-size="10" fill="#555" font-family="Liberation Sans">a</text><text x="6.3" y="8" font-size="10" fill="#7E3F98" font-family="Liberation Sans">b</text><text x="4" y="16" font-size="10" fill="#444" font-family="Liberation Sans">a</text><text x="9.8" y="16" font-size="10" fill="#3C7BC7" font-family="Liberation Sans">c</text><path d="M2.2 10v3.2h2M3 12l1.3 1.2l-1.3 1.2" fill="none" stroke="#3C7BC7" stroke-width="0.9"/></svg>
<div style="position:absolute;left:1009.05px;top:92.24px;font-family:'Liberation Sans';font-size:12px;line-height:12px;font-weight:400;color:#3A3A3A;white-space:nowrap;transform-origin:0 0;transform:scaleX(0.9535);">Replace</div>
<svg style="position:absolute;left:1060px;top:97px;" width="6" height="4" viewBox="0 0 6 4"><path d="M0 0h6l-3 3.5z" fill="#555"/></svg>
<svg style="position:absolute;left:994px;top:111px;" width="11" height="16" viewBox="0 0 11 16"><path d="M1 1v12l3-3l2.5 5l2-1l-2.5-5h4z" fill="#fff" stroke="#555" stroke-width="1" stroke-linejoin="round"/></svg>
<div style="position:absolute;left:1009.03px;top:114.84px;font-family:'Liberation Sans';font-size:12px;line-height:12px;font-weight:400;color:#3A3A3A;white-space:nowrap;transform-origin:0 0;transform:scaleX(0.9688);">Select</div>
<svg style="position:absolute;left:1044px;top:120px;" width="6" height="4" viewBox="0 0 6 4"><path d="M0 0h6l-3 3.5z" fill="#555"/></svg>
<svg style="position:absolute;left:1122px;top:140px;" width="10" height="7" viewBox="0 0 10 7"><path d="M1 5.5l4-4l4 4" fill="none" stroke="#666" stroke-width="1.5"/></svg>
<div style="position:absolute;left:181px;top:156px;width:1px;height:520px;background:#C6C6C6;"></div>
<div style="position:absolute;left:162px;top:171px;width:15px;height:251px;background:#DBDBDB;"></div>
<div style="position:absolute;left:162px;top:156px;width:15px;height:15px;background:#fff;box-sizing:border-box;border:1px solid #ABABAB"></div>
<svg style="position:absolute;left:165px;top:161px;" width="9" height="5" viewBox="0 0 9 5"><path d="M0 4.5h9l-4.5-4.5z" fill="#606060"/></svg>
<div style="position:absolute;left:162px;top:422px;width:15px;height:239px;background:#fff;box-sizing:border-box;border:1px solid #ABABAB"></div>
<div style="position:absolute;left:162px;top:661px;width:15px;height:15px;background:#fff;box-sizing:border-box;border:1px solid #C8C8C8"></div>
<svg style="position:absolute;left:165px;top:667px;" width="9" height="5" viewBox="0 0 9 5"><path d="M0 0h9l-4.5 4.5z" fill="#606060"/></svg>
<svg style="position:absolute;left:325px;top:166px;" width="660" height="495" viewBox="0 0 660 495"><defs><linearGradient id="mbg" x1="0" y1="0" x2="0" y2="1"><stop offset="0.000" stop-color="#1F210E"/><stop offset="0.180" stop-color="#151F10"/><stop offset="0.340" stop-color="#0D1E11"/><stop offset="0.480" stop-color="#061C10"/><stop offset="0.580" stop-color="#0D1A13"/><stop offset="0.685" stop-color="#1E1A1E"/><stop offset="0.786" stop-color="#331628"/><stop offset="0.887" stop-color="#44142F"/><stop offset="1.000" stop-color="#581238"/></linearGradient><linearGradient id="mb1" x1="0" y1="0" x2="1" y2="0"><stop offset="0" stop-color="#1E8C50"/><stop offset="0.08" stop-color="#1E8C50"/><stop offset="0.25" stop-color="#3E8A60"/><stop offset="0.45" stop-color="#608270"/><stop offset="0.6" stop-color="#647465"/><stop offset="0.73" stop-color="#545C4C"/><stop offset="0.86" stop-color="#3A3F2D"/><stop offset="0.95" stop-color="#262A19"/><stop offset="1" stop-color="#202412"/></linearGradient></defs><rect width="660" height="495" fill="url(#mbg)"/><rect x="33" y="33" width="312" height="32.5" rx="16.25" fill="url(#mb1)"/><rect x="368" y="33" width="312" height="32.5" rx="16.25" fill="url(#mb1)"/><path d="M407.3 65.5V115.0M407.3 150.0V199.5M407.3 234.5V284.5M407.3 319.5V368.5M407.3 403.5V451.0M397.8 451h20.5" stroke="#EDEDED" stroke-width="1.3"/><rect x="390.3" y="115.5" width="34.5" height="34.2" rx="5.5" fill="none" stroke="#EDEDED" stroke-width="1.15"/><path d="M399.6 129.4h4v-4h6v4h4v6h-4v4h-6v-4h-4z" fill="none" stroke="#EDEDED" stroke-width="1.05"/><rect x="390.3" y="200.0" width="34.5" height="34.2" rx="5.5" fill="none" stroke="#EDEDED" stroke-width="1.15"/><path d="M399.6 213.9h4v-4h6v4h4v6h-4v4h-6v-4h-4z" fill="none" stroke="#EDEDED" stroke-width="1.05"/><rect x="390.3" y="285.0" width="34.5" height="34.2" rx="5.5" fill="none" stroke="#EDEDED" stroke-width="1.15"/><path d="M399.6 298.9h4v-4h6v4h4v6h-4v4h-6v-4h-4z" fill="none" stroke="#EDEDED" stroke-width="1.05"/><rect x="390.3" y="369.0" width="34.5" height="34.2" rx="5.5" fill="none" stroke="#EDEDED" stroke-width="1.15"/><path d="M399.6 382.9h4v-4h6v4h4v6h-4v4h-6v-4h-4z" fill="none" stroke="#EDEDED" stroke-width="1.05"/><g fill="none" stroke="#EDEDED" stroke-width="1.25" stroke-linejoin="round" stroke-linecap="round">
<rect x="46.4" y="140.4" width="80.2" height="61.2" rx="2"/>
<rect x="52.5" y="145.5" width="69.3" height="51.5"/>
<path d="M52.5 150.5h5.5M52.5 154.5h5.5M52.5 158.5h5.5M52.5 163h5.5M52.5 164.3h5.5M52.5 167h5.5M52.5 171.3h5.5M52.5 175.3h5.5M52.5 179.3h5.5M52.5 184.3h5.5M52.5 188.3h5.5M52.5 192.4h5.5" stroke-width="1.1"/>
<path d="M109.2 150.5h7.8M109.2 153h7.2M109.2 155.5h7.8M109.2 158.5h5.5" stroke-width="1.1"/>
<path d="M80.6 155.4Q90 163 99.5 155.4L118.8 174.4Q90 197 61.6 174.6Z"/>
<circle cx="97" cy="167.3" r="6.4"/>
<path d="M81.8 157.6C77.5 161 77 166 79.8 169.6" stroke-width="1.1"/>
<path d="M83.2 164.3l6 4.2c1.3 0.9 0.3 2.6-1 1.8l-6-4.2c-1.3-0.9-0.3-2.6 1-1.8z" stroke-width="1.1"/>
<path d="M80.5 170.5l-8.6 4.3c-1.5 0.8-0.6 3 1 2.5l4.5-1.8c0.5 2.5 3 4.3 6 4.6c3.6 0.3 6.2-1.6 8-4.2l3.8-2.5" stroke-width="1.1"/>
<path d="M115.8 201.6C122 207.5 130 211.5 137 211C146 210.3 151 204 149 197C147 190 140.5 183 136.5 175C132.5 167 136 159.5 146 157.2C151 156.2 155.5 157.5 158.5 159.8"/>
<rect x="154.2" y="166.2" width="38" height="12" rx="6" transform="rotate(44 173.2 172.2)"/>
<circle cx="182.5" cy="181.3" r="6" fill="#0F1A11"/>
<rect x="163" y="163.5" width="5" height="3" rx="1.5" transform="rotate(44 165.5 165)" stroke-width="1"/>
<rect x="168.5" y="168.8" width="5" height="3" rx="1.5" transform="rotate(44 171 170.3)" stroke-width="1"/>
<path d="M191.8 182.2A9.5 9.5 0 0 1 184.2 190.6M195.3 183.1A13 13 0 0 1 184 194.3M199.4 183.8A17.2 17.2 0 0 1 183.8 198.3" stroke-width="1.1"/>
</g><g fill="none" stroke="#EDEDED" stroke-linejoin="round" stroke-linecap="round">
<rect x="260.5" y="130.5" width="62.5" height="76.2" stroke-width="1.25"/>
<rect x="264.4" y="134.4" width="54.8" height="68.8" stroke-width="1.25"/>
<g stroke-width="0.8">
<path d="M272.39 156.38L281.39 169.78A2.30 2.30 0 0 0 285.21 167.22L276.21 153.82A2.30 2.30 0 0 0 272.39 156.38ZM275.81 161.47L279.63 158.91M278.51 165.49L282.33 162.93M283.06 144.79L284.56 161.99A2.15 2.15 0 0 0 288.84 161.61L287.34 144.41A2.15 2.15 0 0 0 283.06 144.79ZM283.63 151.32L287.91 150.95M284.08 156.48L288.36 156.11M290.20 140.85L290.70 161.85A2.20 2.20 0 0 0 295.10 161.75L294.60 140.75A2.20 2.20 0 0 0 290.20 140.85ZM290.39 148.83L294.79 148.73M290.54 155.13L294.94 155.03M299.36 143.98L297.46 162.58A2.15 2.15 0 0 0 301.74 163.02L303.64 144.42A2.15 2.15 0 0 0 299.36 143.98ZM298.64 151.05L302.92 151.49M298.07 156.63L302.35 157.07M305.72 160.36L302.32 172.76A2.05 2.05 0 0 0 306.28 173.84L309.68 161.44A2.05 2.05 0 0 0 305.72 160.36ZM304.43 165.07L308.39 166.15M303.41 168.79L307.37 169.87M282.04 168.82L285.24 181.32A1.30 1.30 0 0 0 287.76 180.68L284.56 168.18A1.30 1.30 0 0 0 282.04 168.82ZM285.41 161.92L287.21 182.12A1.30 1.30 0 0 0 289.79 181.88L287.99 161.68A1.30 1.30 0 0 0 285.41 161.92ZM291.60 161.76L291.00 181.96A1.30 1.30 0 0 0 293.60 182.04L294.20 161.84A1.30 1.30 0 0 0 291.60 161.76ZM298.32 162.56L294.72 181.76A1.30 1.30 0 0 0 297.28 182.24L300.88 163.04A1.30 1.30 0 0 0 298.32 162.56ZM303.11 172.77L298.31 183.47A1.30 1.30 0 0 0 300.69 184.53L305.49 173.83A1.30 1.30 0 0 0 303.11 172.77Z"/>
<path d="M278.5 166L284.5 182.5L281.8 192L280.3 203.2M307.5 171.5L301 184.5L297.8 192L297.8 203.2"/>
<path d="M282.5 183.5c4.5-2.5 11-2.5 16.5 0.5M282 192c5 1.5 11 1.5 16 0"/>
<circle cx="287" cy="187.5" r="2.4"/><circle cx="292.8" cy="187.8" r="2.6"/>
<path d="M284.5 192.5L286.5 203.2M290 193L289.5 203.2M292.5 192.5L294.5 203.2"/>
</g></g><g fill="none" stroke="#EDEDED" stroke-width="1.2" stroke-linejoin="round">
<path d="M174.5 313.4Q210.4 293 246.3 313.4"/>
<path d="M174.5 313.4V319.4L164 342.5V381.5H169M246.3 313.4V319.4L256.8 342.5V381.5H251.8"/>
<path d="M172.5 322.5C166 328 164 336 165.5 341.5C170 336 173.5 328 172.5 322.5zM248.3 322.5C254.8 328 256.8 336 255.3 341.5C250.8 336 247.3 328 248.3 322.5z" stroke-width="1.1"/>
<path d="M163.5 367.8L194.3 373.3H226.5L257.3 367.8M194.3 373.3V379.3L177.8 380.4M226.5 373.3V379.3L243 380.4"/>
<rect x="205" y="305.2" width="10" height="5.6"/>
<rect x="207" y="316.5" width="6.5" height="4"/>
<path d="M210.2 310.8V316.5M210.2 320.5V322M210.2 356V366"/>
<ellipse cx="210.4" cy="339.2" rx="30.4" ry="26.7"/>
<circle cx="210.2" cy="339" r="24"/>
<circle cx="210.2" cy="339" r="17"/>
<circle cx="183.8" cy="316.9" r="1.5" stroke-width="1"/>
<circle cx="237.5" cy="317" r="1.5" stroke-width="1"/>
<rect x="161.3" y="373.3" width="16.5" height="4.4"/>
<rect x="169" y="379.3" width="8.8" height="3.3"/>
<rect x="243" y="373.3" width="16.5" height="4.4"/>
<rect x="243" y="379.3" width="8.8" height="3.3"/>
</g></svg>
<div style="position:absolute;left:383.50px;top:210.53px;font-family:'Liberation Sans';font-size:12.6px;line-height:12.6px;font-weight:400;color:#EFEFEF;white-space:nowrap;transform-origin:0 0;transform:scaleX(0.9317);">THIS IS A SAMPLE TEXT</div>
<div style="position:absolute;left:719.30px;top:210.53px;font-family:'Liberation Sans';font-size:12.6px;line-height:12.6px;font-weight:400;color:#EFEFEF;white-space:nowrap;transform-origin:0 0;transform:scaleX(0.9262);">THIS IS A SAMPLE TEXT</div>
<div style="position:absolute;left:388.85px;top:402.20px;font-family:'Liberation Sans';font-size:9.8px;line-height:9.8px;font-weight:400;color:#F2F2F2;white-space:nowrap;transform-origin:0 0;transform:scaleX(0.9941);">This is a sample text. Insert</div>
<div style="position:absolute;left:397.80px;top:415.70px;font-family:'Liberation Sans';font-size:9.8px;line-height:9.8px;font-weight:400;color:#F2F2F2;white-space:nowrap;transform-origin:0 0;transform:scaleX(1.0351);">your desired text here.</div>
<div style="position:absolute;left:557.05px;top:402.20px;font-family:'Liberation Sans';font-size:9.8px;line-height:9.8px;font-weight:400;color:#F2F2F2;white-space:nowrap;transform-origin:0 0;transform:scaleX(0.9941);">This is a sample text. Insert</div>
<div style="position:absolute;left:566.00px;top:415.70px;font-family:'Liberation Sans';font-size:9.8px;line-height:9.8px;font-weight:400;color:#F2F2F2;white-space:nowrap;transform-origin:0 0;transform:scaleX(1.0351);">your desired text here.</div>
<div style="position:absolute;left:476.45px;top:576.70px;font-family:'Liberation Sans';font-size:9.8px;line-height:9.8px;font-weight:400;color:#F2F2F2;white-space:nowrap;transform-origin:0 0;transform:scaleX(0.9941);">This is a sample text. Insert</div>
<div style="position:absolute;left:485.40px;top:590.20px;font-family:'Liberation Sans';font-size:9.8px;line-height:9.8px;font-weight:400;color:#F2F2F2;white-space:nowrap;transform-origin:0 0;transform:scaleX(1.0351);">your desired text here.</div>
<div style="position:absolute;left:771.40px;top:286.90px;font-family:'Liberation Sans';font-size:9.8px;line-height:9.8px;font-weight:400;color:#F2F2F2;white-space:nowrap;transform-origin:0 0;transform:scaleX(1.0035);">This is a sample text. Insert your</div>
<div style="position:absolute;left:771.40px;top:300.60px;font-family:'Liberation Sans';font-size:9.8px;line-height:9.8px;font-weight:400;color:#F2F2F2;white-space:nowrap;transform-origin:0 0;transform:scaleX(1.0347);">desired text here.</div>
<div style="position:absolute;left:771.40px;top:372.50px;font-family:'Liberation Sans';font-size:9.8px;line-height:9.8px;font-weight:400;color:#F2F2F2;white-space:nowrap;transform-origin:0 0;transform:scaleX(1.0035);">This is a sample text. Insert your</div>
<div style="position:absolute;left:771.40px;top:386.20px;font-family:'Liberation Sans';font-size:9.8px;line-height:9.8px;font-weight:400;color:#F2F2F2;white-space:nowrap;transform-origin:0 0;transform:scaleX(1.0347);">desired text here.</div>
<div style="position:absolute;left:771.40px;top:456.30px;font-family:'Liberation Sans';font-size:9.8px;line-height:9.8px;font-weight:400;color:#F2F2F2;white-space:nowrap;transform-origin:0 0;transform:scaleX(1.0035);">This is a sample text. Insert your</div>
<div style="position:absolute;left:771.40px;top:470.00px;font-family:'Liberation Sans';font-size:9.8px;line-height:9.8px;font-weight:400;color:#F2F2F2;white-space:nowrap;transform-origin:0 0;transform:scaleX(1.0347);">desired text here.</div>
<div style="position:absolute;left:771.40px;top:543.40px;font-family:'Liberation Sans';font-size:9.8px;line-height:9.8px;font-weight:400;color:#F2F2F2;white-space:nowrap;transform-origin:0 0;transform:scaleX(1.0035);">This is a sample text. Insert your</div>
<div style="position:absolute;left:771.40px;top:557.10px;font-family:'Liberation Sans';font-size:9.8px;line-height:9.8px;font-weight:400;color:#F2F2F2;white-space:nowrap;transform-origin:0 0;transform:scaleX(1.0347);">desired text here.</div>
<div style="position:absolute;left:27px;top:154px;width:114px;height:78px;background:#D0D0D0;"></div>
<div style="position:absolute;left:28px;top:154px;width:112px;height:77px;background:#FFFFFF;"></div>
<div style="position:absolute;left:0;top:154px;width:180px;height:100px;overflow:hidden">
<svg style="position:absolute;left:29px;top:-7px" width="110" height="83" viewBox="0 0 660 495" preserveAspectRatio="none"><defs><linearGradient id="s6bg" x1="0" y1="0" x2="0" y2="1"><stop offset="0.000" stop-color="#3A1410"/><stop offset="0.500" stop-color="#35200F"/><stop offset="1.000" stop-color="#3A2912"/></linearGradient><linearGradient id="s6b1" x1="0" y1="0" x2="1" y2="0"><stop offset="0" stop-color="#E29A42"/><stop offset="0.15" stop-color="#E29A42"/><stop offset="0.5" stop-color="#8A7A6A" stop-opacity="0.8"/><stop offset="1" stop-color="#ffffff" stop-opacity="0.05"/></linearGradient></defs><rect width="660" height="495" fill="url(#s6bg)"/><rect x="33" y="33" width="312" height="32.5" rx="16.25" fill="url(#s6b1)"/><rect x="368" y="33" width="312" height="32.5" rx="16.25" fill="url(#s6b1)"/><path d="M65 49h120M400 49h120" stroke="#F0F0F0" stroke-width="6" stroke-dasharray="14 4 10 4 24 4 20 4" opacity="0.55"/><path d="M410 65.5V110.0M410 145.0V202.0M410 237.0V288.0M410 323.0V366.0M410 401.0V457.0M397 457.0h26" stroke="#EDEDED" stroke-width="7"/><rect x="393.5" y="111.0" width="33" height="33" rx="6" fill="none" stroke="#EDEDED" stroke-width="7"/><path d="M445 122.0h130M445 136.0h75" stroke="#E0E0E0" stroke-width="4.5" stroke-dasharray="12 4 20 4 9 4" opacity="0.5"/><rect x="393.5" y="203.0" width="33" height="33" rx="6" fill="none" stroke="#EDEDED" stroke-width="7"/><path d="M445 214.0h130M445 228.0h75" stroke="#E0E0E0" stroke-width="4.5" stroke-dasharray="12 4 20 4 9 4" opacity="0.5"/><rect x="393.5" y="289.0" width="33" height="33" rx="6" fill="none" stroke="#EDEDED" stroke-width="7"/><path d="M445 300.0h130M445 314.0h75" stroke="#E0E0E0" stroke-width="4.5" stroke-dasharray="12 4 20 4 9 4" opacity="0.5"/><rect x="393.5" y="367.0" width="33" height="33" rx="6" fill="none" stroke="#EDEDED" stroke-width="7"/><path d="M445 378.0h130M445 392.0h75" stroke="#E0E0E0" stroke-width="4.5" stroke-dasharray="12 4 20 4 9 4" opacity="0.5"/><g fill="none" stroke="#E0D4CC" stroke-width="3" opacity="0.9"><rect x="84" y="108" width="64" height="95"/><path d="M100 140c10-12 30-12 34 0c2 8-10 12-16 16M98 168c10 8 28 8 38 0M108 150v8M126 150v8"/><rect x="232" y="128" width="102" height="66"/><path d="M272 108h16M245 145h25M245 178h25M290 145h8M310 145h8M290 160h8M310 160h8" /><path d="M245 160h28" stroke-width="8"/><path d="M245 185h30" stroke-width="6"/><rect x="57" y="309" width="117" height="82"/><path d="M57 380h117M75 325v40M95 330c8 10 8 20 0 30M110 340h40" /><path d="M120 355h45" stroke-width="8"/><rect x="258" y="306" width="52" height="88"/><path d="M272 296h16M258 380h52M275 325v12M283 345v18M295 350v13"/></g><path d="M58.0 223.0h120.0M68.0 237.0h100.0" stroke="#D8D8D8" stroke-width="5" stroke-dasharray="12 4 20 4 9 4" opacity="0.5"/><path d="M222.0 223.0h125.0M234.5 237.0h100.0" stroke="#D8D8D8" stroke-width="5" stroke-dasharray="12 4 20 4 9 4" opacity="0.5"/><path d="M58.0 411.0h120.0M68.0 425.0h100.0" stroke="#D8D8D8" stroke-width="5" stroke-dasharray="12 4 20 4 9 4" opacity="0.5"/><path d="M222.0 411.0h125.0M234.5 425.0h100.0" stroke="#D8D8D8" stroke-width="5" stroke-dasharray="12 4 20 4 9 4" opacity="0.5"/></svg>
</div>
<div style="position:absolute;left:0;top:154px;width:30px;height:12px;overflow:hidden"><div style="position:absolute;left:0;top:-154px;width:30px;height:200px">
<div style="position:absolute;left:12.37px;top:143.30px;font-family:'Liberation Sans';font-size:15px;line-height:15px;font-weight:400;color:#595959;white-space:nowrap;transform-origin:0 0;transform:scaleX(1.0286);">6</div>
</div></div>
<div style="position:absolute;left:27px;top:250px;width:114px;height:87px;background:#D0D0D0;"></div>
<div style="position:absolute;left:28px;top:251px;width:112px;height:85px;background:#FFFFFF;"></div>
<svg style="position:absolute;left:29px;top:252px" width="110" height="83" viewBox="0 0 660 495" preserveAspectRatio="none"><defs><linearGradient id="s7bg" x1="0" y1="0" x2="0" y2="1"><stop offset="0.000" stop-color="#3B2A13"/><stop offset="0.500" stop-color="#2B2A12"/><stop offset="1.000" stop-color="#2A3014"/></linearGradient><linearGradient id="s7b1" x1="0" y1="0" x2="1" y2="0"><stop offset="0" stop-color="#94B84E"/><stop offset="0.15" stop-color="#94B84E"/><stop offset="0.5" stop-color="#8A7A6A" stop-opacity="0.8"/><stop offset="1" stop-color="#ffffff" stop-opacity="0.05"/></linearGradient></defs><rect width="660" height="495" fill="url(#s7bg)"/><rect x="33" y="33" width="312" height="32.5" rx="16.25" fill="url(#s7b1)"/><rect x="368" y="33" width="312" height="32.5" rx="16.25" fill="url(#s7b1)"/><path d="M65 49h120M400 49h120" stroke="#F0F0F0" stroke-width="6" stroke-dasharray="14 4 10 4 24 4 20 4" opacity="0.55"/><path d="M410 65.5V114.0M410 149.0V202.0M410 237.0V288.0M410 323.0V458.0M397 458.0h26" stroke="#EDEDED" stroke-width="7"/><rect x="393.5" y="115.0" width="33" height="33" rx="6" fill="none" stroke="#EDEDED" stroke-width="7"/><path d="M445 126.0h130M445 140.0h75" stroke="#E0E0E0" stroke-width="4.5" stroke-dasharray="12 4 20 4 9 4" opacity="0.5"/><rect x="393.5" y="203.0" width="33" height="33" rx="6" fill="none" stroke="#EDEDED" stroke-width="7"/><path d="M445 214.0h130M445 228.0h75" stroke="#E0E0E0" stroke-width="4.5" stroke-dasharray="12 4 20 4 9 4" opacity="0.5"/><rect x="393.5" y="289.0" width="33" height="33" rx="6" fill="none" stroke="#EDEDED" stroke-width="7"/><path d="M445 300.0h130M445 314.0h75" stroke="#E0E0E0" stroke-width="4.5" stroke-dasharray="12 4 20 4 9 4" opacity="0.5"/><g fill="none" stroke="#E8E8E0" stroke-width="3.5"><path d="M70 145h260M110 120l40 25l-40 25M290 120l-40 25l40 25M150 110l50 35l50-35M170 185l30-40l30 40"/><circle cx="72" cy="145" r="8"/><circle cx="110" cy="118" r="8"/><circle cx="150" cy="108" r="8"/><circle cx="200" cy="98" r="8"/><circle cx="250" cy="108" r="8"/><circle cx="290" cy="118" r="8"/><circle cx="328" cy="145" r="8"/><circle cx="110" cy="172" r="7"/><circle cx="170" cy="188" r="7"/><circle cx="230" cy="188" r="7"/><circle cx="290" cy="172" r="7"/><path d="M200 110v70" stroke="#4A90C8" stroke-width="6"/><rect x="190" y="200" width="20" height="32"/><path d="M62 320h45v85h-45zM75 312h45v85M88 304h45v85"/><path d="M68 345h30M68 365h30M68 385h30" stroke-width="7"/><rect x="212" y="334" width="100" height="70"/><circle cx="313" cy="332" r="17"/><path d="M225 380h75" stroke-width="12" stroke-dasharray="10 3 30 3 20"/><path d="M225 350h70"/><path d="M160 365h22" stroke-width="7"/></g><path d="M135.0 254.0h125.0M147.5 268.0h100.0" stroke="#D8D8D8" stroke-width="5" stroke-dasharray="12 4 20 4 9 4" opacity="0.5"/><path d="M135.0 430.0h125.0M147.5 444.0h100.0" stroke="#D8D8D8" stroke-width="5" stroke-dasharray="12 4 20 4 9 4" opacity="0.5"/></svg>
<div style="position:absolute;left:25px;top:353px;width:118px;height:91px;background:#D24726;"></div>
<div style="position:absolute;left:28px;top:356px;width:112px;height:85px;background:#FFFFFF;"></div>
<svg style="position:absolute;left:29px;top:357px" width="110" height="83" viewBox="0 0 660 495" preserveAspectRatio="none"><defs><linearGradient id="t8bg" x1="0" y1="0" x2="0" y2="1"><stop offset="0.000" stop-color="#1F210E"/><stop offset="0.180" stop-color="#151F10"/><stop offset="0.340" stop-color="#0D1E11"/><stop offset="0.480" stop-color="#061C10"/><stop offset="0.580" stop-color="#0D1A13"/><stop offset="0.685" stop-color="#1E1A1E"/><stop offset="0.786" stop-color="#331628"/><stop offset="0.887" stop-color="#44142F"/><stop offset="1.000" stop-color="#581238"/></linearGradient><linearGradient id="t8b1" x1="0" y1="0" x2="1" y2="0"><stop offset="0" stop-color="#1E8C50"/><stop offset="0.08" stop-color="#1E8C50"/><stop offset="0.25" stop-color="#3E8A60"/><stop offset="0.45" stop-color="#608270"/><stop offset="0.6" stop-color="#647465"/><stop offset="0.73" stop-color="#545C4C"/><stop offset="0.86" stop-color="#3A3F2D"/><stop offset="0.95" stop-color="#262A19"/><stop offset="1" stop-color="#202412"/></linearGradient></defs><rect width="660" height="495" fill="url(#t8bg)"/><rect x="33" y="33" width="312" height="32.5" rx="16.25" fill="url(#t8b1)"/><rect x="368" y="33" width="312" height="32.5" rx="16.25" fill="url(#t8b1)"/><path d="M407.3 65.5V115.0M407.3 150.0V199.5M407.3 234.5V284.5M407.3 319.5V368.5M407.3 403.5V451.0M397.8 451h20.5" stroke="#EDEDED" stroke-width="6.24"/><rect x="390.3" y="115.5" width="34.5" height="34.2" rx="5.5" fill="none" stroke="#EDEDED" stroke-width="5.52"/><rect x="390.3" y="200.0" width="34.5" height="34.2" rx="5.5" fill="none" stroke="#EDEDED" stroke-width="5.52"/><rect x="390.3" y="285.0" width="34.5" height="34.2" rx="5.5" fill="none" stroke="#EDEDED" stroke-width="5.52"/><rect x="390.3" y="369.0" width="34.5" height="34.2" rx="5.5" fill="none" stroke="#EDEDED" stroke-width="5.52"/><g opacity="0.85"><g fill="none" stroke="#EDEDED" stroke-width="2.75" stroke-linejoin="round" stroke-linecap="round">
<rect x="46.4" y="140.4" width="80.2" height="61.2" rx="2"/>
<rect x="52.5" y="145.5" width="69.3" height="51.5"/>
<path d="M52.5 150.5h5.5M52.5 154.5h5.5M52.5 158.5h5.5M52.5 163h5.5M52.5 164.3h5.5M52.5 167h5.5M52.5 171.3h5.5M52.5 175.3h5.5M52.5 179.3h5.5M52.5 184.3h5.5M52.5 188.3h5.5M52.5 192.4h5.5" stroke-width="2.42"/>
<path d="M109.2 150.5h7.8M109.2 153h7.2M109.2 155.5h7.8M109.2 158.5h5.5" stroke-width="2.42"/>
<path d="M80.6 155.4Q90 163 99.5 155.4L118.8 174.4Q90 197 61.6 174.6Z"/>
<circle cx="97" cy="167.3" r="6.4"/>
<path d="M81.8 157.6C77.5 161 77 166 79.8 169.6" stroke-width="2.42"/>
<path d="M83.2 164.3l6 4.2c1.3 0.9 0.3 2.6-1 1.8l-6-4.2c-1.3-0.9-0.3-2.6 1-1.8z" stroke-width="2.42"/>
<path d="M80.5 170.5l-8.6 4.3c-1.5 0.8-0.6 3 1 2.5l4.5-1.8c0.5 2.5 3 4.3 6 4.6c3.6 0.3 6.2-1.6 8-4.2l3.8-2.5" stroke-width="2.42"/>
<path d="M115.8 201.6C122 207.5 130 211.5 137 211C146 210.3 151 204 149 197C147 190 140.5 183 136.5 175C132.5 167 136 159.5 146 157.2C151 156.2 155.5 157.5 158.5 159.8"/>
<rect x="154.2" y="166.2" width="38" height="12" rx="6" transform="rotate(44 173.2 172.2)"/>
<circle cx="182.5" cy="181.3" r="6" fill="#0F1A11"/>
<rect x="163" y="163.5" width="5" height="3" rx="1.5" transform="rotate(44 165.5 165)" stroke-width="2.20"/>
<rect x="168.5" y="168.8" width="5" height="3" rx="1.5" transform="rotate(44 171 170.3)" stroke-width="2.20"/>
<path d="M191.8 182.2A9.5 9.5 0 0 1 184.2 190.6M195.3 183.1A13 13 0 0 1 184 194.3M199.4 183.8A17.2 17.2 0 0 1 183.8 198.3" stroke-width="2.42"/>
</g><g fill="none" stroke="#EDEDED" stroke-linejoin="round" stroke-linecap="round">
<rect x="260.5" y="130.5" width="62.5" height="76.2" stroke-width="2.75"/>
<rect x="264.4" y="134.4" width="54.8" height="68.8" stroke-width="2.75"/>
<g stroke-width="1.76">
<path d="M272.39 156.38L281.39 169.78A2.30 2.30 0 0 0 285.21 167.22L276.21 153.82A2.30 2.30 0 0 0 272.39 156.38ZM275.81 161.47L279.63 158.91M278.51 165.49L282.33 162.93M283.06 144.79L284.56 161.99A2.15 2.15 0 0 0 288.84 161.61L287.34 144.41A2.15 2.15 0 0 0 283.06 144.79ZM283.63 151.32L287.91 150.95M284.08 156.48L288.36 156.11M290.20 140.85L290.70 161.85A2.20 2.20 0 0 0 295.10 161.75L294.60 140.75A2.20 2.20 0 0 0 290.20 140.85ZM290.39 148.83L294.79 148.73M290.54 155.13L294.94 155.03M299.36 143.98L297.46 162.58A2.15 2.15 0 0 0 301.74 163.02L303.64 144.42A2.15 2.15 0 0 0 299.36 143.98ZM298.64 151.05L302.92 151.49M298.07 156.63L302.35 157.07M305.72 160.36L302.32 172.76A2.05 2.05 0 0 0 306.28 173.84L309.68 161.44A2.05 2.05 0 0 0 305.72 160.36ZM304.43 165.07L308.39 166.15M303.41 168.79L307.37 169.87M282.04 168.82L285.24 181.32A1.30 1.30 0 0 0 287.76 180.68L284.56 168.18A1.30 1.30 0 0 0 282.04 168.82ZM285.41 161.92L287.21 182.12A1.30 1.30 0 0 0 289.79 181.88L287.99 161.68A1.30 1.30 0 0 0 285.41 161.92ZM291.60 161.76L291.00 181.96A1.30 1.30 0 0 0 293.60 182.04L294.20 161.84A1.30 1.30 0 0 0 291.60 161.76ZM298.32 162.56L294.72 181.76A1.30 1.30 0 0 0 297.28 182.24L300.88 163.04A1.30 1.30 0 0 0 298.32 162.56ZM303.11 172.77L298.31 183.47A1.30 1.30 0 0 0 300.69 184.53L305.49 173.83A1.30 1.30 0 0 0 303.11 172.77Z"/>
<path d="M278.5 166L284.5 182.5L281.8 192L280.3 203.2M307.5 171.5L301 184.5L297.8 192L297.8 203.2"/>
<path d="M282.5 183.5c4.5-2.5 11-2.5 16.5 0.5M282 192c5 1.5 11 1.5 16 0"/>
<circle cx="287" cy="187.5" r="2.4"/><circle cx="292.8" cy="187.8" r="2.6"/>
<path d="M284.5 192.5L286.5 203.2M290 193L289.5 203.2M292.5 192.5L294.5 203.2"/>
</g></g><g fill="none" stroke="#EDEDED" stroke-width="2.64" stroke-linejoin="round">
<path d="M174.5 313.4Q210.4 293 246.3 313.4"/>
<path d="M174.5 313.4V319.4L164 342.5V381.5H169M246.3 313.4V319.4L256.8 342.5V381.5H251.8"/>
<path d="M172.5 322.5C166 328 164 336 165.5 341.5C170 336 173.5 328 172.5 322.5zM248.3 322.5C254.8 328 256.8 336 255.3 341.5C250.8 336 247.3 328 248.3 322.5z" stroke-width="2.42"/>
<path d="M163.5 367.8L194.3 373.3H226.5L257.3 367.8M194.3 373.3V379.3L177.8 380.4M226.5 373.3V379.3L243 380.4"/>
<rect x="205" y="305.2" width="10" height="5.6"/>
<rect x="207" y="316.5" width="6.5" height="4"/>
<path d="M210.2 310.8V316.5M210.2 320.5V322M210.2 356V366"/>
<ellipse cx="210.4" cy="339.2" rx="30.4" ry="26.7"/>
<circle cx="210.2" cy="339" r="24"/>
<circle cx="210.2" cy="339" r="17"/>
<circle cx="183.8" cy="316.9" r="1.5" stroke-width="2.20"/>
<circle cx="237.5" cy="317" r="1.5" stroke-width="2.20"/>
<rect x="161.3" y="373.3" width="16.5" height="4.4"/>
<rect x="169" y="379.3" width="8.8" height="3.3"/>
<rect x="243" y="373.3" width="16.5" height="4.4"/>
<rect x="243" y="379.3" width="8.8" height="3.3"/>
</g></g><path d="M65 49h120M400 49h120" stroke="#F0F0F0" stroke-width="6" stroke-dasharray="14 4 10 4 24 4 20 4" opacity="0.55"/><path d="M446 128h135M446 141h75" stroke="#E0E0E0" stroke-width="4.5" stroke-dasharray="12 4 20 4 9 4" opacity="0.5"/><path d="M446 213h135M446 226h75" stroke="#E0E0E0" stroke-width="4.5" stroke-dasharray="12 4 20 4 9 4" opacity="0.5"/><path d="M446 298h135M446 311h75" stroke="#E0E0E0" stroke-width="4.5" stroke-dasharray="12 4 20 4 9 4" opacity="0.5"/><path d="M446 385h135M446 398h75" stroke="#E0E0E0" stroke-width="4.5" stroke-dasharray="12 4 20 4 9 4" opacity="0.5"/><path d="M63.0 240.0h120.0M73.0 254.0h100.0" stroke="#D8D8D8" stroke-width="5" stroke-dasharray="12 4 20 4 9 4" opacity="0.5"/><path d="M231.0 240.0h120.0M241.0 254.0h100.0" stroke="#D8D8D8" stroke-width="5" stroke-dasharray="12 4 20 4 9 4" opacity="0.5"/><path d="M150.0 415.0h120.0M160.0 429.0h100.0" stroke="#D8D8D8" stroke-width="5" stroke-dasharray="12 4 20 4 9 4" opacity="0.5"/></svg>
<div style="position:absolute;left:27px;top:460px;width:114px;height:87px;background:#D0D0D0;"></div>
<div style="position:absolute;left:28px;top:461px;width:112px;height:85px;background:#FFFFFF;"></div>
<svg style="position:absolute;left:29px;top:462px" width="110" height="83" viewBox="0 0 660 495" preserveAspectRatio="none"><defs><linearGradient id="s9bg" x1="0" y1="0" x2="0" y2="1"><stop offset="0.000" stop-color="#16203C"/><stop offset="0.300" stop-color="#2C1A3A"/><stop offset="0.600" stop-color="#541238"/><stop offset="1.000" stop-color="#580E36"/></linearGradient></defs><rect width="660" height="495" fill="url(#s9bg)"/><text x="50" y="110" font-family="Liberation Sans" font-size="52" fill="#ECE8F0" textLength="383" lengthAdjust="spacingAndGlyphs">THIS IS A SAMPLE</text><text x="50" y="183" font-family="Liberation Sans" font-size="52" fill="#ECE8F0" textLength="122" lengthAdjust="spacingAndGlyphs">TEXT.</text><path d="M50 224h395" stroke="#E8D8E8" stroke-width="5" stroke-dasharray="16 4 24 4 10 4 30 4" opacity="0.6"/><path d="M50 244h398" stroke="#E8D8E8" stroke-width="5" stroke-dasharray="16 4 24 4 10 4 30 4" opacity="0.6"/><path d="M50 261h370" stroke="#E8D8E8" stroke-width="5" stroke-dasharray="16 4 24 4 10 4 30 4" opacity="0.6"/><path d="M50 281h384" stroke="#E8D8E8" stroke-width="5" stroke-dasharray="16 4 24 4 10 4 30 4" opacity="0.6"/><path d="M50 300h246" stroke="#E8D8E8" stroke-width="5" stroke-dasharray="16 4 24 4 10 4 30 4" opacity="0.6"/><rect x="52" y="404" width="298" height="41" rx="5" fill="none" stroke="#D8C8D8" stroke-width="6"/><path d="M125 424h153" stroke="#E8D8E8" stroke-width="7" stroke-dasharray="40 4 30 4 70" opacity="0.6"/></svg>
<div style="position:absolute;left:27px;top:565px;width:114px;height:87px;background:#D0D0D0;"></div>
<div style="position:absolute;left:28px;top:566px;width:112px;height:85px;background:#FFFFFF;"></div>
<svg style="position:absolute;left:29px;top:567px" width="110" height="83" viewBox="0 0 660 495" preserveAspectRatio="none"><defs><radialGradient id="s10bg" cx="0.5" cy="0.5" r="0.7"><stop offset="0" stop-color="#1282B0"/><stop offset="0.5" stop-color="#1080AE"/><stop offset="1" stop-color="#095478"/></radialGradient></defs><rect width="660" height="495" fill="url(#s10bg)"/><path d="M262 236v28h12" fill="none" stroke="#F2C811" stroke-width="8"/><path d="M264 236h14v14" fill="none" stroke="#D9272E" stroke-width="6"/><path d="M288 252h100" stroke="#FFFFFF" stroke-width="14" stroke-dasharray="22 3 18 3 30 3 20" opacity="0.9"/></svg>
<svg style="position:absolute;left:11px;top:161.5px;" width="11" height="10" viewBox="0 0 11 10"><path d="M6 0.3l1.4 3.1h3.5l-2.8 2.2l1.1 3.6l-3.2-2.1l-3.2 2.1l1.1-3.6l-2.8-2.2h3.5z" fill="#666666"/><path d="M0 2.2l1.2 0.6M0 5.3h1.5" stroke="#666666" stroke-width="1"/></svg>
<svg style="position:absolute;left:11px;top:266.5px;" width="11" height="10" viewBox="0 0 11 10"><path d="M6 0.3l1.4 3.1h3.5l-2.8 2.2l1.1 3.6l-3.2-2.1l-3.2 2.1l1.1-3.6l-2.8-2.2h3.5z" fill="#666666"/><path d="M0 2.2l1.2 0.6M0 5.3h1.5" stroke="#666666" stroke-width="1"/></svg>
<svg style="position:absolute;left:11px;top:371.5px;" width="11" height="10" viewBox="0 0 11 10"><path d="M6 0.3l1.4 3.1h3.5l-2.8 2.2l1.1 3.6l-3.2-2.1l-3.2 2.1l1.1-3.6l-2.8-2.2h3.5z" fill="#666666"/><path d="M0 2.2l1.2 0.6M0 5.3h1.5" stroke="#666666" stroke-width="1"/></svg>
<svg style="position:absolute;left:11px;top:476.5px;" width="11" height="10" viewBox="0 0 11 10"><path d="M6 0.3l1.4 3.1h3.5l-2.8 2.2l1.1 3.6l-3.2-2.1l-3.2 2.1l1.1-3.6l-2.8-2.2h3.5z" fill="#666666"/><path d="M0 2.2l1.2 0.6M0 5.3h1.5" stroke="#666666" stroke-width="1"/></svg>
<div style="position:absolute;left:12.37px;top:248.30px;font-family:'Liberation Sans';font-size:15px;line-height:15px;font-weight:400;color:#595959;white-space:nowrap;transform-origin:0 0;transform:scaleX(1.0286);">7</div>
<div style="position:absolute;left:12.67px;top:352.80px;font-family:'Liberation Sans';font-size:15px;line-height:15px;font-weight:400;color:#D24726;white-space:nowrap;transform-origin:0 0;transform:scaleX(1.0286);">8</div>
<div style="position:absolute;left:12.29px;top:458.30px;font-family:'Liberation Sans';font-size:15px;line-height:15px;font-weight:400;color:#595959;white-space:nowrap;transform-origin:0 0;transform:scaleX(1.0143);">9</div>
<div style="position:absolute;left:4.51px;top:563.30px;font-family:'Liberation Sans';font-size:15px;line-height:15px;font-weight:400;color:#595959;white-space:nowrap;transform-origin:0 0;transform:scaleX(0.9933);">10</div>
<div style="position:absolute;left:1126px;top:171px;width:15px;height:433px;background:#DBDBDB;"></div>
<div style="position:absolute;left:1126px;top:156px;width:15px;height:15px;background:#fff;box-sizing:border-box;border:1px solid #ABABAB"></div>
<svg style="position:absolute;left:1129px;top:161px;" width="9" height="5" viewBox="0 0 9 5"><path d="M0 4.5h9l-4.5-4.5z" fill="#606060"/></svg>
<div style="position:absolute;left:1126px;top:474px;width:15px;height:43px;background:#fff;box-sizing:border-box;border:1px solid #ABABAB"></div>
<div style="position:absolute;left:1126px;top:604px;width:15px;height:15px;background:#fff;box-sizing:border-box;border:1px solid #ABABAB"></div>
<svg style="position:absolute;left:1129px;top:609px;" width="9" height="5" viewBox="0 0 9 5"><path d="M0 0h9l-4.5 4.5z" fill="#606060"/></svg>
<svg style="position:absolute;left:1129px;top:623px;" width="9" height="9" viewBox="0 0 9 9"><path d="M0.5 4.5h8l-4-4.5z" fill="#6A6A6A"/><path d="M0.5 8.7h8l-4-4.5z" fill="#6A6A6A"/></svg>
<svg style="position:absolute;left:1129px;top:641px;" width="9" height="10" viewBox="0 0 9 10"><path d="M0.5 0.8h8l-4 4.5z" fill="#6A6A6A"/><path d="M0.5 4.8h8l-4 4.5z" fill="#6A6A6A"/></svg>
<div style="position:absolute;left:184px;top:675px;width:957px;height:1px;background:#C8C8C8;"></div>
<div style="position:absolute;left:1px;top:678px;width:1141px;height:1px;background:#C8C8C8;"></div>
<div style="position:absolute;left:1px;top:679px;width:1141px;height:21px;background:#F1F1F1;"></div>
<div style="position:absolute;left:7.75px;top:682.14px;font-family:'Liberation Sans';font-size:12px;line-height:12px;font-weight:400;color:#444444;white-space:nowrap;transform-origin:0 0;transform:scaleX(0.9492);">Slide 8 of 10</div>
<svg style="position:absolute;left:90px;top:682px;" width="17" height="14" viewBox="0 0 17 14"><path d="M1 1.5h6v11h-6zM7 1.5h4l-1 5M7 12.5h3" fill="none" stroke="#555" stroke-width="1.1"/><path d="M10 11l5-7l1.5 1l-5 7l-2 1z" fill="none" stroke="#555" stroke-width="1.1"/></svg>
<svg style="position:absolute;left:623px;top:682px;" width="12" height="13" viewBox="0 0 12 13"><path d="M0 6.5h11M0 9h11M0 11.5h11" stroke="#666" stroke-width="1"/><path d="M3 4l2.5-3l2.5 3" fill="none" stroke="#666" stroke-width="1.2"/></svg>
<div style="position:absolute;left:639.22px;top:682.64px;font-family:'Liberation Sans';font-size:12px;line-height:12px;font-weight:400;color:#444444;white-space:nowrap;transform-origin:0 0;transform:scaleX(0.9767);">Notes</div>
<svg style="position:absolute;left:690px;top:682px;" width="14" height="14" viewBox="0 0 14 14"><path d="M0.5 1h12.5v8.5h-7l-3 3.5v-3.5h-2.5z" fill="#666"/></svg>
<div style="position:absolute;left:706.37px;top:682.64px;font-family:'Liberation Sans';font-size:12px;line-height:12px;font-weight:400;color:#444444;white-space:nowrap;transform-origin:0 0;transform:scaleX(0.9333);">Comments</div>
<div style="position:absolute;left:780px;top:679px;width:38px;height:21px;background:#C9C9C9;"></div>
<svg style="position:absolute;left:791px;top:682px;" width="16" height="14" viewBox="0 0 16 14"><rect x="0.5" y="0.5" width="14" height="12.5" fill="none" stroke="#666" stroke-width="1.1"/><path d="M3.5 0.5v9.5h11M5.5 3h6v4h-6z" fill="none" stroke="#666" stroke-width="1.1"/></svg>
<svg style="position:absolute;left:829px;top:682px;" width="16" height="14" viewBox="0 0 16 14"><path d="M1 1h5v4.5h-5zM9 1h5v4.5h-5zM1 8h5v4.5h-5zM9 8h5v4.5h-5z" fill="none" stroke="#666" stroke-width="1.1"/></svg>
<svg style="position:absolute;left:868px;top:682px;" width="14" height="14" viewBox="0 0 14 14"><path d="M0.5 1h6v11h-6zM7 1h6v11h-6z" fill="none" stroke="#666" stroke-width="1.1"/><path d="M2 3.5h3M2 5.5h3M2 7.5h3M2 9.5h3M8.5 3.5h3M8.5 5.5h3M8.5 7.5h3M8.5 9.5h3" stroke="#666" stroke-width="0.9"/><path d="M6.5 12v1.5" stroke="#666"/></svg>
<svg style="position:absolute;left:905px;top:682px;" width="15" height="14" viewBox="0 0 15 14"><path d="M0.5 1h14M1.5 1v6h12v-6M7.5 7v5M4.5 12.5h6" fill="none" stroke="#666" stroke-width="1.2"/><path d="M4 3.5h7" stroke="#666" stroke-width="1.1"/></svg>
<div style="position:absolute;left:937px;top:688px;width:6px;height:2px;background:#555;"></div>
<div style="position:absolute;left:947px;top:688px;width:102px;height:1px;background:#A6A6A6;"></div>
<div style="position:absolute;left:998px;top:686px;width:1px;height:5px;background:#A6A6A6;"></div>
<div style="position:absolute;left:979px;top:683px;width:4px;height:11px;background:#666;"></div>
<svg style="position:absolute;left:1053px;top:684px;" width="9" height="9" viewBox="0 0 9 9"><path d="M4.5 0v9M0 4.5h9" stroke="#555" stroke-width="2"/></svg>
<div style="position:absolute;left:1074.45px;top:682.84px;font-family:'Liberation Sans';font-size:12px;line-height:12px;font-weight:400;color:#444444;white-space:nowrap;transform-origin:0 0;transform:scaleX(0.9478);">68%</div>
<svg style="position:absolute;left:1111px;top:682px;" width="14" height="15" viewBox="0 0 14 15"><rect x="0.5" y="0.5" width="13" height="13.5" fill="none" stroke="#666" stroke-width="1"/><path d="M7 2.5v3M5.5 4l1.5-1.5l1.5 1.5M7 12v-3M5.5 10.5l1.5 1.5l1.5-1.5M2.5 7.25h3M4 5.75l-1.5 1.5l1.5 1.5M11.5 7.25h-3M10 5.75l1.5 1.5l-1.5 1.5" fill="none" stroke="#666" stroke-width="0.9"/></svg></body></html>
